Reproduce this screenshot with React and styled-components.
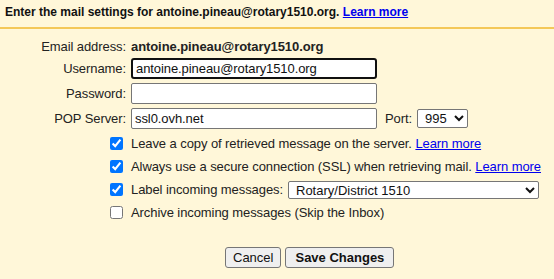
import React from "react";
import styled, { createGlobalStyle } from "styled-components";

const GlobalStyle = createGlobalStyle`
  html, body {
    margin: 0;
    padding: 0;
    background: #fff7d9;
  }
  body {
    font-family: "Liberation Sans", Arial, sans-serif;
    font-size: 13px;
    color: #222;
  }
`;

const Page = styled.div`
  width: 554px;
  height: 279px;
  background: #fff7d9;
  overflow: hidden;
`;

const Header = styled.div`
  height: 27px;
  line-height: 24px;
  padding-left: 5px;
  font-size: 12px;
  font-weight: bold;
  color: #111;
  border-bottom: 2px solid #f4c858;
`;

const Link = styled.a`
  color: #0000ee;
  text-decoration: underline;
  font-weight: ${(p) => (p.$bold ? "bold" : "normal")};
  cursor: pointer;
`;

const Form = styled.div`
  display: flex;
  flex-direction: column;
  margin-top: 7px;
  letter-spacing: -0.08px;
`;

const Row = styled.div`
  display: flex;
  align-items: center;
  gap: 5px;
  height: ${(p) => p.$h}px;
`;

const Label = styled.div`
  width: 126px;
  flex: none;
  text-align: right;
  display: flex;
  justify-content: flex-end;
  align-items: center;
`;

const Value = styled.span`
  font-weight: bold;
`;

const TextInput = styled.input`
  box-sizing: border-box;
  width: 246px;
  height: 21px;
  margin: 0;
  padding: 0 3px;
  font-family: "Liberation Sans", Arial, sans-serif;
  font-size: 13px;
  letter-spacing: -0.08px;
  color: #111;
  background: #fff;
  border: ${(p) => (p.$focused ? "2px solid #101010" : "1px solid #767676")};
  border-radius: ${(p) => (p.$focused ? "3px" : "2px")};
  outline: none;
`;

const Select = styled.select`
  box-sizing: border-box;
  width: ${(p) => p.$w}px;
  height: ${(p) => p.$hgt}px;
  margin: 0;
  padding: 0 0 0 3px;
  font-family: "Liberation Sans", Arial, sans-serif;
  font-size: 13px;
  color: #111;
  background: #fff;
  border: 1px solid #767676;
  border-radius: 2px;
`;

const PortLabel = styled.span`
  margin-left: 3px;
`;

const Checks = styled.div`
  display: flex;
  flex-direction: column;
  margin-top: 1px;
`;

const Box = styled.input`
  width: 13px;
  height: 13px;
  margin: 0 3px 0 0;
  accent-color: #0075ff;
`;

const Buttons = styled.div`
  display: flex;
  gap: 4px;
  margin-top: 23px;
  padding-left: 225px;
`;

const Button = styled.button`
  height: 21px;
  padding: ${(p) => (p.$primary ? "0 9px" : "0 7px")};
  font-family: "Liberation Sans", Arial, sans-serif;
  font-size: 13px;
  font-weight: ${(p) => (p.$primary ? "bold" : "normal")};
  color: #111;
  background: #efefef;
  border: 1px solid #767676;
  border-radius: 3px;
`;

const CheckRow = ({ checked, children }) => (
  <Row $h={23}>
    <Label>
      <Box type="checkbox" defaultChecked={checked} />
    </Label>
    <span>{children}</span>
  </Row>
);

export default function App() {
  return (
    <Page>
      <GlobalStyle />
      <Header>
        Enter the mail settings for antoine.pineau@rotary1510.org.{" "}
        <Link $bold>Learn more</Link>
      </Header>
      <Form>
        <Row $h={20}>
          <Label>Email address:</Label>
          <Value>antoine.pineau@rotary1510.org</Value>
        </Row>
        <Row $h={25}>
          <Label>Username:</Label>
          <TextInput $focused defaultValue="antoine.pineau@rotary1510.org" />
        </Row>
        <Row $h={25}>
          <Label>Password:</Label>
          <TextInput type="password" />
        </Row>
        <Row $h={25}>
          <Label>POP Server:</Label>
          <TextInput defaultValue="ssl0.ovh.net" />
          <PortLabel>Port:</PortLabel>
          <Select $w={51} $hgt={19} defaultValue="995">
            <option>110</option>
            <option>995</option>
          </Select>
        </Row>
        <Checks>
          <CheckRow checked>
            Leave a copy of retrieved message on the server. <Link>Learn more</Link>
          </CheckRow>
          <CheckRow checked>
            Always use a secure connection (SSL) when retrieving mail.{" "}
            <Link>Learn more</Link>
          </CheckRow>
          <Row $h={23}>
            <Label>
              <Box type="checkbox" defaultChecked />
            </Label>
            <span>Label incoming messages:</span>
            <Select $w={251} $hgt={18} defaultValue="r">
              <option value="r">Rotary/District 1510</option>
            </Select>
          </Row>
          <CheckRow>Archive incoming messages (Skip the Inbox)</CheckRow>
        </Checks>
        <Buttons>
          <Button>Cancel</Button>
          <Button $primary>Save Changes</Button>
        </Buttons>
      </Form>
    </Page>
  );
}
